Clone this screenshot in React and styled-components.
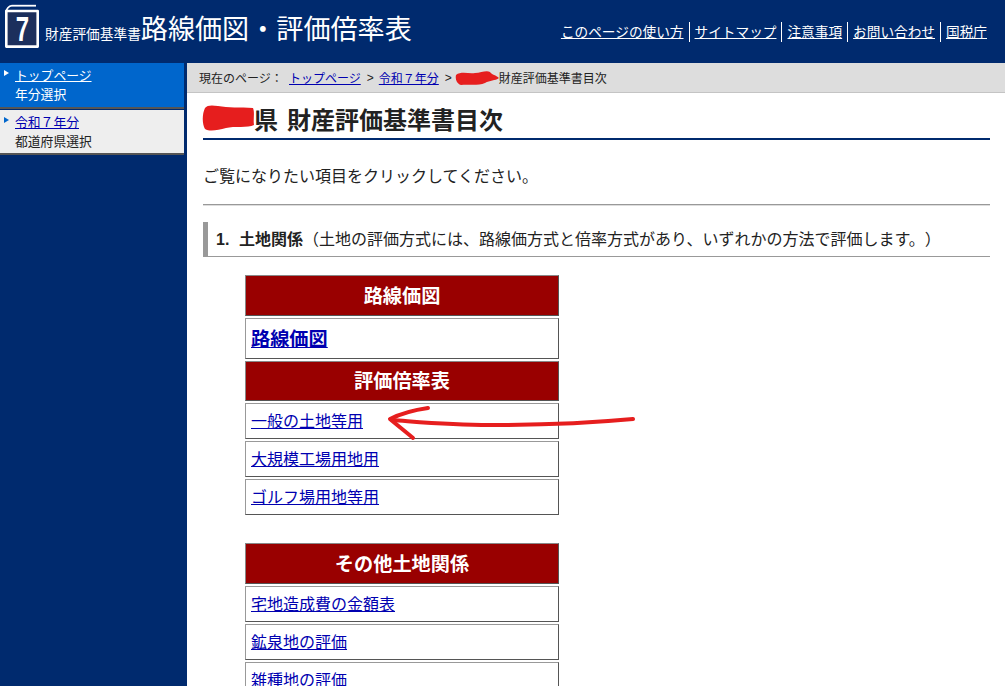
import React from 'react';
import styled, { createGlobalStyle } from 'styled-components';

const GlobalStyle = createGlobalStyle`
    html, body {
        margin: 0;
        height: 100%;
        overflow: hidden;
        background: #002a6e;
        font-family: "Noto Sans CJK JP", "Liberation Sans", sans-serif;
        color: #222;
        text-spacing-trim: space-all;
    }
    #root {
        height: 100%;
    }
    a {
        color: #0000b0;
    }
`;

const navLinks = ['このページの使い方', 'サイトマップ', '注意事項', 'お問い合わせ', '国税庁'];

const tableOne = [
    { head: '路線価図', height: 41 },
    { link: '路線価図', big: true, height: 41 },
    { head: '評価倍率表', height: 40 },
    { link: '一般の土地等用', height: 36 },
    { link: '大規模工場用地用', height: 36 },
    { link: 'ゴルフ場用地等用', height: 36 },
];

const tableTwo = [
    { head: 'その他土地関係', height: 41 },
    { link: '宅地造成費の金額表', height: 36 },
    { link: '鉱泉地の評価', height: 36 },
    { link: '雑種地の評価', height: 36 },
];

function BookIcon() {
    return (
        <svg width="35" height="44" viewBox="0 0 35 44">
            <path d="M7 1.7H31" stroke="#fff" strokeWidth="1.8" />
            <path d="M1.3 8A6.3 6.3 0 0 1 7 1.7" fill="none" stroke="#fff" strokeWidth="1.8" />
            <path d="M1.3 7H32.7V42.6H1.3Z" fill="#1c2f5c" stroke="#fff" strokeWidth="2.6" strokeLinejoin="round" />
            <text transform="translate(17.5 36.5) scale(0.8 1.15)" textAnchor="middle" fill="#fff" fontSize="30" fontWeight="700" fontFamily="Liberation Sans, sans-serif">7</text>
        </svg>
    );
}

function RedMark({ width, height, d }) {
    return (
        <Blot width={width} height={height} viewBox={`0 0 ${width} ${height}`}>
            <path d={d} fill="#e61e1e" />
        </Blot>
    );
}

function ListTable({ rows }) {
    return (
        <Table>
            <tbody>
                {rows.map((row, i) => (
                    <tr key={i}>
                        {row.head ? (
                            <HeadCell $height={row.height}>{row.head}</HeadCell>
                        ) : (
                            <LinkCell $height={row.height} $big={row.big}>
                                <a href="#">{row.link}</a>
                            </LinkCell>
                        )}
                    </tr>
                ))}
            </tbody>
        </Table>
    );
}

function App() {
    return (
        <Page>
            <GlobalStyle />
            <Header>
                <Brand>
                    <BookIcon />
                    <SubTitle>財産評価基準書</SubTitle>
                    <MainTitle>路線価図・評価倍率表</MainTitle>
                </Brand>
                <Nav>
                    {navLinks.map((label) => (
                        <NavItem key={label}>
                            <a href="#">{label}</a>
                        </NavItem>
                    ))}
                </Nav>
            </Header>
            <Body>
                <Sidebar>
                    <SideItem $active>
                        <Marker $active />
                        <div>
                            <a href="#">トップページ</a>
                            <SideNote>年分選択</SideNote>
                        </div>
                    </SideItem>
                    <SideItem>
                        <Marker />
                        <div>
                            <a href="#">令和７年分</a>
                            <SideNote>都道府県選択</SideNote>
                        </div>
                    </SideItem>
                </Sidebar>
                <Main>
                    <Breadcrumb>
                        <span>現在のページ：</span>
                        <a href="#">トップページ</a>
                        <Sep>&gt;</Sep>
                        <a href="#">令和７年分</a>
                        <Sep>&gt;</Sep>
                        <RedMark width={44} height={16} d="M1 5C6 1 14 4 20 3C26 3 31 0 35 2C37 5 41 5 44 8C40 11 35 10 30 13C23 16 13 14 6 15C2 14 0 9 1 5Z" />
                        <span>財産評価基準書目次</span>
                    </Breadcrumb>
                    <Content>
                        <Title>
                            <RedMark width={52} height={27} d="M3 3C5 0 10 0 16 1C26 3 38 2 51 3C53 8 51 14 52 20C46 23 32 21 24 23C16 25 8 27 3 24C0 19 0 9 3 3Z" />
                            <span>県&nbsp;&nbsp;財産評価基準書目次</span>
                        </Title>
                        <Lead>ご覧になりたい項目をクリックしてください。</Lead>
                        <Rule />
                        <Section>
                            <strong><Num>1.</Num>土地関係</strong>（土地の評価方式には、路線価方式と倍率方式があり、いずれかの方法で評価します。）
                        </Section>
                        <ListTable rows={tableOne} />
                        <ListTable rows={tableTwo} />
                    </Content>
                </Main>
            </Body>
            <Arrow width="260" height="40" viewBox="0 0 260 40">
                <path d="M253 14C210 18 160 20 110 20C70 20 40 17 12 15" fill="none" stroke="#e61e1e" strokeWidth="4" strokeLinecap="round" />
                <path d="M48 3C34 5 20 9 10 14C17 20 26 27 33 33" fill="none" stroke="#e61e1e" strokeWidth="4" strokeLinecap="round" strokeLinejoin="round" />
            </Arrow>
        </Page>
    );
}

const Page = styled.div`
    position: relative;
    height: 100%;
    display: flex;
    flex-direction: column;
`;

const Header = styled.header`
    height: 63px;
    flex: none;
    display: flex;
    justify-content: space-between;
    background: #002a6e;
    color: #fff;
`;

const Brand = styled.div`
    box-sizing: border-box;
    display: flex;
    align-items: flex-end;
    padding-left: 5px;
    height: 48px;
    svg {
        flex: none;
        margin: 0 5px 0 0;
    }
`;

const SubTitle = styled.span`
    font-size: 13.7px;
    line-height: 20px;
    margin-bottom: 5px;
`;

const MainTitle = styled.span`
    font-size: 27.1px;
    line-height: 40px;
`;

const Nav = styled.nav`
    display: flex;
    align-items: center;
    height: 20px;
    margin-top: 22px;
    padding-right: 18px;
`;

const NavItem = styled.div`
    box-sizing: border-box;
    display: flex;
    align-items: center;
    height: 20px;
    padding: 0 5px 2px 5px;
    border-left: 1px solid #fff;
    font-size: 13.67px;
    &:first-child {
        border-left: none;
    }
    &:last-child {
        padding-right: 0;
    }
    a {
        color: #fff;
    }
`;

const Body = styled.div`
    flex: 1;
    display: flex;
    min-height: 0;
`;

const Sidebar = styled.aside`
    width: 187px;
    flex: none;
    background: #002a6e;
`;

const SideItem = styled.div`
    width: 184px;
    box-sizing: border-box;
    height: ${(props) => (props.$active ? '46px' : '45px')};
    margin-bottom: ${(props) => (props.$active ? '1px' : '0')};
    display: flex;
    padding: 2px 0 0 4px;
    font-size: 12.8px;
    line-height: 19px;
    background: ${(props) => (props.$active ? '#0066cc' : '#eeeeee')};
    color: ${(props) => (props.$active ? '#fff' : '#222')};
    border-bottom: 2px solid #555;
    a {
        color: ${(props) => (props.$active ? '#fff' : '#0000b0')};
    }
`;

const Marker = styled.span`
    flex: none;
    width: 0;
    height: 0;
    margin: 5px 6px 0 0;
    border-left: 5px solid ${(props) => (props.$active ? '#fff' : '#0066cc')};
    border-top: 3.5px solid transparent;
    border-bottom: 3.5px solid transparent;
`;

const SideNote = styled.div`
    margin-top: 0;
`;

const Main = styled.main`
    flex: 1;
    min-width: 0;
    background: #fff;
    overflow: hidden;
`;

const Breadcrumb = styled.div`
    height: 30px;
    box-sizing: border-box;
    display: flex;
    align-items: center;
    padding-left: 12px;
    background: #dddddd;
    border-bottom: 1px solid #c4c4c4;
    font-size: 12px;
    white-space: nowrap;
    & > span:first-child {
        margin-right: 6px;
        width: 84px;
    }
    & > svg {
        margin-left: -2px;
    }
`;

const Sep = styled.span`
    font-family: "Liberation Sans", sans-serif;
    margin: 0 5px 0 6px;
`;

const Blot = styled.svg`
    flex: none;
    display: block;
`;

const Content = styled.div`
    padding: 0 15px 0 16px;
`;

const Title = styled.h2`
    display: flex;
    align-items: center;
    height: 38px;
    margin: 0;
    padding-top: 7px;
    border-bottom: 2px solid #002a6e;
    font-size: 24px;
    font-weight: 700;
    line-height: 34px;
    white-space: nowrap;
    word-spacing: -1px;
    & > svg {
        margin: -1px 0 0 -1px;
    }
`;

const Lead = styled.p`
    margin: 23px 0 0;
    font-size: 16px;
    line-height: 24px;
`;

const Rule = styled.hr`
    margin: 17px 0 0;
    border: none;
    border-top: 1px solid #999;
    height: 1px;
    background: #ddd;
`;

const Section = styled.h3`
    box-sizing: border-box;
    height: 35px;
    margin: 16px 0 0;
    padding: 2px 0 0 8px;
    border-left: 5px solid #999;
    border-bottom: 1px solid #999;
    font-size: 16px;
    font-weight: 400;
    line-height: 28px;
    white-space: nowrap;
    strong {
        font-weight: 700;
    }
`;

const Num = styled.span`
    font-family: "Liberation Sans", sans-serif;
    display: inline-block;
    width: 23px;
`;

const Table = styled.table`
    width: 318px;
    margin: 16px 0 24px 40px;
    border-collapse: separate;
    border-spacing: 2px;
    & + & {
        margin-top: 0;
    }
`;

const HeadCell = styled.th`
    box-sizing: border-box;
    height: ${(props) => props.$height}px;
    padding: 0 0 2px;
    background: #990000;
    color: #fff;
    font-size: 19.2px;
    font-weight: 700;
    line-height: 24px;
    text-align: center;
    border: 1px solid;
    border-color: #888 #555 #555 #888;
`;

const LinkCell = styled.td`
    box-sizing: border-box;
    height: ${(props) => props.$height}px;
    padding: 0 5px 2px;
    border: 1px solid;
    border-color: #999 #555 #555 #999;
    font-size: ${(props) => (props.$big ? '19.2px' : '16px')};
    font-weight: ${(props) => (props.$big ? 700 : 400)};
    line-height: 24px;
`;

const Arrow = styled.svg`
    position: absolute;
    left: 380px;
    top: 405px;
    pointer-events: none;
`;

export default App;
